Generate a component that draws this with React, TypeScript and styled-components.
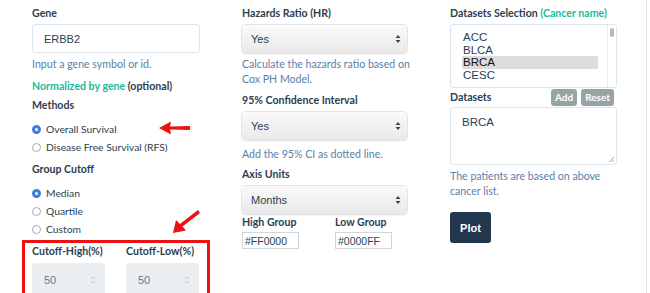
import React from 'react';
import styled, { createGlobalStyle } from 'styled-components';

const GlobalStyle = createGlobalStyle`
    html, body {
        margin: 0;
        padding: 0;
        background: #ffffff;
    }
    body {
        font-family: Lato, "Noto Sans", sans-serif;
        color: #2c3e50;
    }
`;

const Page = styled.div`
    position: relative;
    width: 647px;
    height: 293px;
    overflow: hidden;
    border-right: 1px solid #e6e6e6;
    display: grid;
    grid-template-columns: 210px 208px 1fr;
    padding: 5px 0 0 32px;
    box-sizing: border-box;
`;

const Column = styled.div`
    display: flex;
    flex-direction: column;
`;

const Label = styled.div<{ $mt?: number }>`
    font-size: 10.6px;
    font-weight: 700;
    line-height: 17px;
    margin-top: ${p => p.$mt ?? 0}px;
    white-space: nowrap;

    .green {
        color: #18bc9c;
    }
`;

const Help = styled.div<{ $mt?: number }>`
    font-size: 10.6px;
    line-height: 15px;
    color: #5a80a6;
    margin-top: ${p => p.$mt ?? 0}px;
`;

const TextInput = styled.div`
    width: 168px;
    height: 29px;
    margin-top: 2px;
    box-sizing: border-box;
    border: 1px solid #dce4ec;
    border-radius: 3px;
    padding-left: 11px;
    display: flex;
    align-items: center;
    font-family: "Liberation Sans", Arial, sans-serif;
    font-size: 11px;
    color: #2c3e50;
`;

const RadioGroup = styled.div<{ $mt: number }>`
    display: flex;
    flex-direction: column;
    margin-top: ${p => p.$mt}px;
`;

const RadioRow = styled.label`
    display: flex;
    align-items: center;
    height: 18px;
    font-size: 10.3px;
    color: #2c3e50;
`;

const RadioDot = styled.span<{ $checked?: boolean }>`
    width: 9px;
    height: 9px;
    border-radius: 50%;
    box-sizing: border-box;
    margin: 0 5px 0 0;
    border: ${p => (p.$checked ? '3px solid #3f7ee8' : '1px solid #a9a9a9')};
    background: #ffffff;
    flex-shrink: 0;
`;

const CutoffBox = styled.div`
    margin: 2px 0 0 -10px;
    width: 188px;
    height: 70px;
    box-sizing: border-box;
    border: 3px solid #ee1111;
    padding: 0 0 0 7px;
    display: grid;
    grid-template-columns: 94px 1fr;
`;

const CutoffField = styled.div`
    display: flex;
    flex-direction: column;
`;

const NumberBox = styled.div`
    width: 73px;
    height: 34px;
    margin-top: 3px;
    background: #eceff1;
    border-radius: 3px;
    display: flex;
    align-items: center;
    justify-content: space-between;
    padding: 0 9px 0 12px;
    box-sizing: border-box;
    font-family: "Liberation Sans", Arial, sans-serif;
    font-size: 11px;
    color: #5b7da3;
`;

const SelectBox = styled.div`
    width: 165px;
    height: 28px;
    margin-top: 3px;
    box-sizing: border-box;
    border-radius: 4px;
    background: linear-gradient(#fafafa, #e9e9e9);
    box-shadow: 0 0 0 1px #e1e5ea, 0 1px 2px rgba(0, 0, 0, 0.1);
    display: flex;
    align-items: center;
    justify-content: space-between;
    padding: 0 6px 0 9px;
    font-family: "Liberation Sans", Arial, sans-serif;
    font-size: 11px;
    color: #2c3e50;
`;

const ColorRow = styled.div`
    display: grid;
    grid-template-columns: 93px 1fr;
`;

const ColorInput = styled.div`
    width: 57px;
    height: 17px;
    margin-top: 1px;
    box-sizing: border-box;
    border: 1px solid #cfd6dd;
    padding-left: 2px;
    display: flex;
    align-items: center;
    font-family: "Liberation Sans", Arial, sans-serif;
    font-size: 10.5px;
    color: #2c3e50;
`;

const ListBox = styled.div`
    position: relative;
    width: 167px;
    height: 64px;
    margin-top: 2px;
    box-sizing: border-box;
    border: 1px solid #dce4ec;
    border-radius: 3px;
    padding: 6px 0 0 11px;
    font-family: "Liberation Sans", Arial, sans-serif;
    font-size: 11.5px;
    color: #2c3e50;
`;

const ListItem = styled.div<{ $selected?: boolean }>`
    width: 135px;
    height: 12.5px;
    line-height: 12.5px;
    padding-left: 1px;
    background: ${p => (p.$selected ? '#dcdcdc' : 'transparent')};
    color: ${p => (p.$selected ? '#111111' : '#2c3e50')};
`;

const ScrollTrack = styled.div`
    position: absolute;
    top: 0;
    right: 0;
    width: 8px;
    height: 100%;
    border-left: 1px solid #eeeeee;

    &::after {
        content: '';
        position: absolute;
        top: 3px;
        left: 2px;
        width: 4px;
        height: 9px;
        border-radius: 2px;
        background: #b9b9b9;
    }
`;

const DatasetsHeader = styled.div`
    display: flex;
    align-items: center;
    width: 164px;
    height: 18px;
    margin-top: 0;
`;

const SmallButton = styled.button`
    height: 17px;
    padding: 0 4px;
    margin-left: 4px;
    border: none;
    border-radius: 3px;
    background: #95a5a6;
    color: #ffffff;
    font-family: Lato, sans-serif;
    font-weight: 700;
    font-size: 10px;
    &:first-of-type {
        margin-left: auto;
    }
`;

const TextArea = styled.div`
    position: relative;
    width: 167px;
    height: 58px;
    margin-top: 1px;
    box-sizing: border-box;
    border: 1px solid #dce4ec;
    border-radius: 3px;
    padding: 8px 0 0 11px;
    font-family: "Liberation Sans", Arial, sans-serif;
    font-size: 11.5px;
    color: #2c3e50;

    svg {
        position: absolute;
        right: 2px;
        bottom: 2px;
    }
`;

const PlotButton = styled.button`
    width: 41px;
    height: 31px;
    margin-top: 13px;
    border: none;
    border-radius: 3px;
    background: #22384f;
    color: #ffffff;
    font-family: "Liberation Sans", Arial, sans-serif;
    font-weight: 700;
    font-size: 11px;
    padding: 0;
`;

const Arrow = styled.svg<{ $left: number; $top: number }>`
    position: absolute;
    left: ${p => p.$left}px;
    top: ${p => p.$top}px;
`;

const UpDown = () => (
    <svg width="6" height="10" viewBox="0 0 6 10">
        <path d="M3 1 L5.5 4 H0.5 Z M3 9 L5.5 6 H0.5 Z" fill="#444" />
    </svg>
);

const Spinner = () => (
    <svg width="6" height="10" viewBox="0 0 6 10" fill="none" stroke="#b8c0c8" strokeWidth="0.9">
        <path d="M1 3.8 L3 1.5 L5 3.8 M1 6.2 L3 8.5 L5 6.2" />
    </svg>
);

const Select: React.FC<{ value: string }> = ({ value }) => (
    <SelectBox>
        <span>{value}</span>
        <UpDown />
    </SelectBox>
);

export default function App() {
    return (
        <>
            <GlobalStyle />
            <Page>
                <Column>
                    <Label>Gene</Label>
                    <TextInput>ERBB2</TextInput>
                    <Help $mt={4}>Input a gene symbol or id.</Help>
                    <Label $mt={6}><span className="green">Normalized by gene</span> (optional)</Label>
                    <Label $mt={2}>Methods</Label>
                    <RadioGroup $mt={6}>
                        <RadioRow><RadioDot $checked />Overall Survival</RadioRow>
                        <RadioRow><RadioDot />Disease Free Survival (RFS)</RadioRow>
                    </RadioGroup>
                    <Label $mt={5}>Group Cutoff</Label>
                    <RadioGroup $mt={6}>
                        <RadioRow><RadioDot $checked />Median</RadioRow>
                        <RadioRow><RadioDot />Quartile</RadioRow>
                        <RadioRow><RadioDot />Custom</RadioRow>
                    </RadioGroup>
                    <CutoffBox>
                        <CutoffField>
                            <Label>Cutoff-High(%)</Label>
                            <NumberBox>50<Spinner /></NumberBox>
                        </CutoffField>
                        <CutoffField>
                            <Label>Cutoff-Low(%)</Label>
                            <NumberBox>50<Spinner /></NumberBox>
                        </CutoffField>
                    </CutoffBox>
                </Column>

                <Column>
                    <Label>Hazards Ratio (HR)</Label>
                    <Select value="Yes" />
                    <Help $mt={4}>Calculate the hazards ratio based on<br />Cox PH Model.</Help>
                    <Label $mt={5}>95% Confidence Interval</Label>
                    <Select value="Yes" />
                    <Help $mt={7}>Add the 95% CI as dotted line.</Help>
                    <Label $mt={4}>Axis Units</Label>
                    <Select value="Months" />
                    <ColorRow>
                        <Label>High Group</Label>
                        <Label>Low Group</Label>
                        <ColorInput>#FF0000</ColorInput>
                        <ColorInput>#0000FF</ColorInput>
                    </ColorRow>
                </Column>

                <Column>
                    <Label>Datasets Selection <span className="green">(Cancer name)</span></Label>
                    <ListBox>
                        <ListItem>ACC</ListItem>
                        <ListItem>BLCA</ListItem>
                        <ListItem $selected>BRCA</ListItem>
                        <ListItem>CESC</ListItem>
                        <ScrollTrack />
                    </ListBox>
                    <DatasetsHeader>
                        <Label>Datasets</Label>
                        <SmallButton>Add</SmallButton>
                        <SmallButton>Reset</SmallButton>
                    </DatasetsHeader>
                    <TextArea>
                        BRCA
                        <svg width="6" height="6" viewBox="0 0 6 6" stroke="#888" strokeWidth="0.8">
                            <path d="M1 6 L6 1 M3.5 6 L6 3.5" />
                        </svg>
                    </TextArea>
                    <Help $mt={4}>The patients are based on above<br />cancer list.</Help>
                    <PlotButton>Plot</PlotButton>
                </Column>

                <Arrow $left={159} $top={121} width="32" height="14" viewBox="0 0 32 14">
                    <path d="M0 7 L12 0.5 L11 5.5 L31 5 L31 9 L11 8.5 L12 13.5 Z" fill="#ee1111" />
                </Arrow>
                <Arrow $left={171} $top={209} width="30" height="26" viewBox="0 0 30 26">
                    <path d="M2 24 L5 11 L9 15 L27 1 L29 4 L11.5 17.5 L15 21.5 Z" fill="#ee1111" />
                </Arrow>
            </Page>
        </>
    );
}
